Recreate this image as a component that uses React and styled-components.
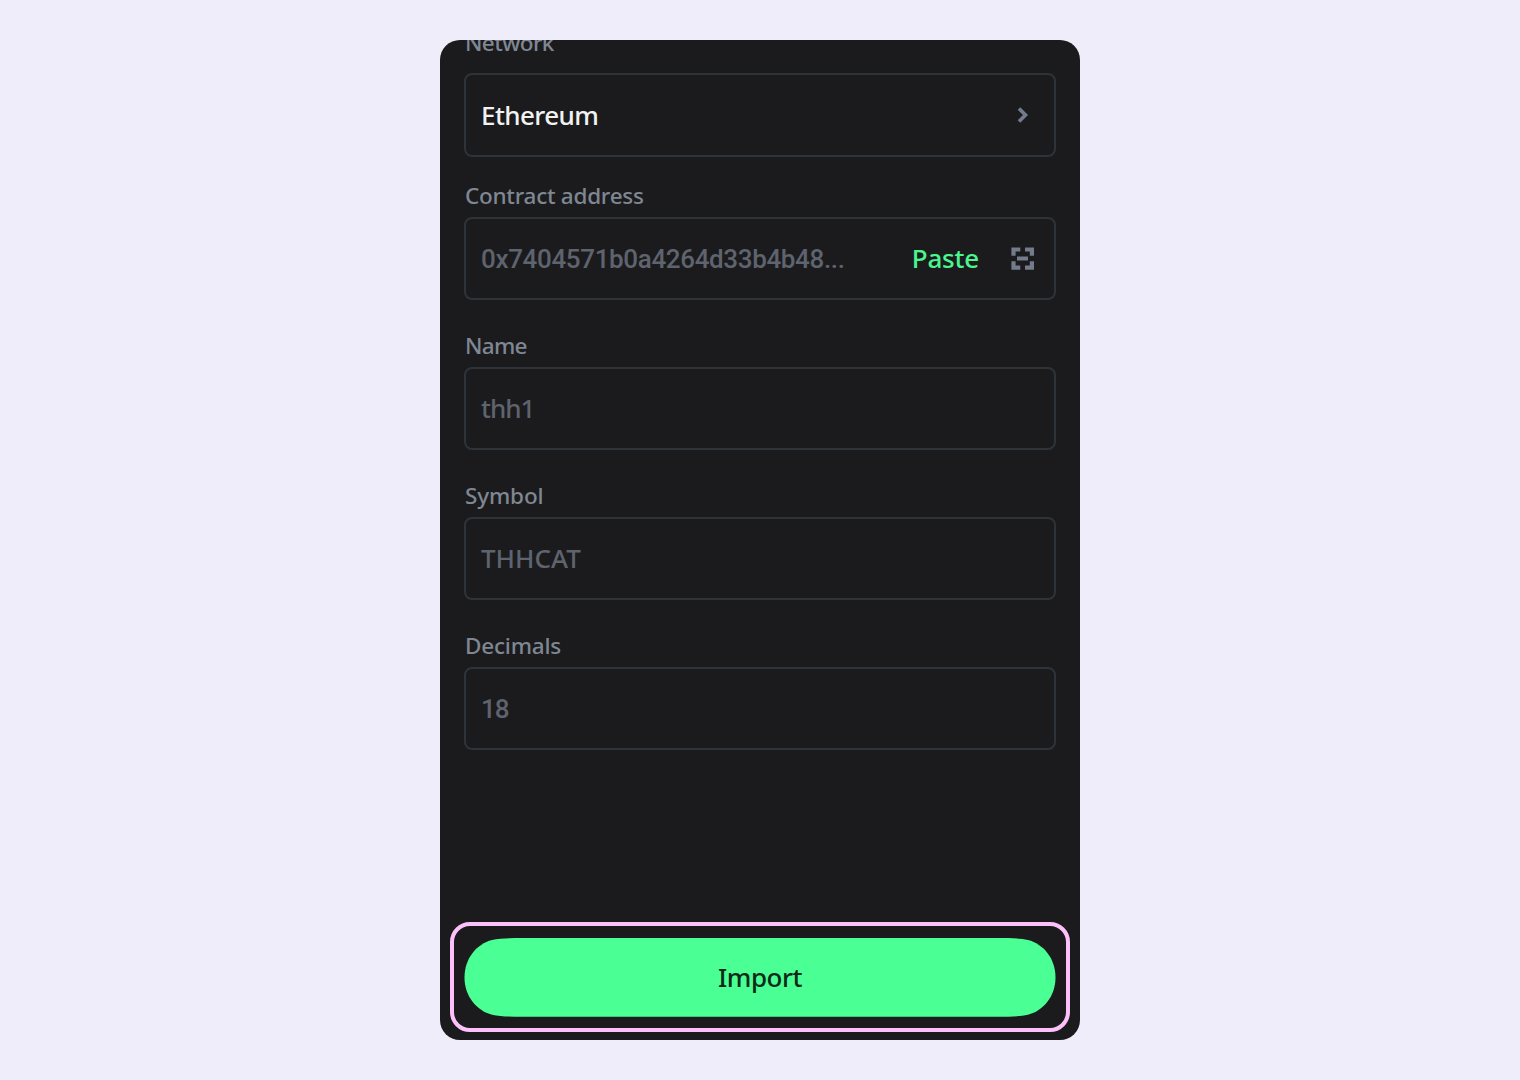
import React from 'react';
import styled, { createGlobalStyle } from 'styled-components';

const GlobalStyle = createGlobalStyle`
  * {
    box-sizing: border-box;
  }

  body {
    margin: 0;
    background: #efedfa;
    font-family: "Noto Sans", "Open Sans", sans-serif;
  }
`;

const Page = styled.main`
  display: flex;
  justify-content: center;
  height: 1080px;
  padding: 40px 0;
`;

const Panel = styled.section`
  display: flex;
  flex-direction: column;
  width: 640px;
  height: 1000px;
  padding: 0 10px 8px;
  overflow: hidden;
  border-radius: 20px;
  background: #1b1b1d;
`;

const Form = styled.div`
  display: flex;
  flex-direction: column;
  flex: 1;
  padding: 0 14px;
  margin-top: -13px;
`;

const Field = styled.div`
  display: flex;
  flex-direction: column;
  margin-bottom: ${({ $after }) => $after}px;
`;

const Label = styled.label`
  height: 30px;
  margin-bottom: ${({ $gap }) => $gap}px;
  padding-left: 1px;
  color: #7f8793;
  font-size: 22.5px;
  font-weight: 500;
  line-height: 32px;
  letter-spacing: ${({ $spacing }) => $spacing || 0}px;
`;

const Control = styled.div`
  display: flex;
  align-items: center;
  height: ${({ $height }) => $height || 83}px;
  padding: 0 19px 0 15px;
  border: 2px solid #2e333a;
  border-radius: 8px;
`;

const Value = styled.span`
  flex: 1;
  color: ${({ $filled }) => ($filled ? '#f2f2f2' : '#5e636e')};
  font-family: ${({ $numeric }) => ($numeric ? 'Roboto, sans-serif' : '"Noto Sans", sans-serif')};
  font-size: 26px;
  font-weight: 500;
  line-height: 36px;
  padding-bottom: ${({ $lift }) => $lift || 0}px;
  letter-spacing: ${({ $spacing }) => $spacing || 0}px;
`;

const PasteButton = styled.button`
  margin-right: 32px;
  padding: 0 0 1px;
  border: 0;
  background: none;
  color: #4bf590;
  font: 500 26px/36px "Noto Sans", sans-serif;
  letter-spacing: -0.2px;
`;

const Icon = styled.svg`
  display: block;
  width: 24px;
  height: 24px;
  color: #747b8b;
`;

const Footer = styled.div`
  padding: 12px 10px 11px;
  border: 4px solid #fcc1fb;
  border-radius: 20px;
`;

const ImportButton = styled.button`
  display: block;
  width: 592px;
  height: 79px;
  padding: 0;
  border: 0;
  background: #4aff93;
  clip-path: path("M.5 39.5C.5 20.5 12.5 6 28 2C36 .2 46 0 58 0H534C546 0 556 .2 564 2C579.5 6 591.5 20.5 591.5 39.5C591.5 58.2 579.5 72.7 564 76.7C556 78.5 546 78.7 534 78.7H58C46 78.7 36 78.5 28 76.7C12.5 72.7 .5 58.2 .5 39.5Z");
  color: #0b2a18;
  font: 500 26px/79px "Noto Sans", sans-serif;
  letter-spacing: -0.5px;
`;

const ChevronIcon = () => (
  <Icon viewBox="0 0 24 24" fill="none" stroke="currentColor" strokeWidth="3.6">
    <path d="M8 5.5L14.5 12L8 18.5" />
  </Icon>
);

const ScanIcon = () => (
  <Icon viewBox="0 0 24 24" fill="currentColor">
    <path d="M.4 .4H9.3V4.4H4.6V8.8H.4ZM14 .4H23V8.8H18.8V4.4H14ZM.4 14.2H4.6V18.6H9.3V22.7H.4ZM18.8 14.2H23V22.7H14V18.6H18.8ZM6 9.4H17V13.4H6Z" />
  </Icon>
);

const App = () => (
  <>
    <GlobalStyle />
    <Page>
      <Panel>
        <Form>
          <Field $after={23}>
            <Label $gap={16} $spacing={-0.6}>Network</Label>
            <Control $height={84}>
              <Value $filled $spacing={-0.6}>Ethereum</Value>
              <ChevronIcon />
            </Control>
          </Field>
          <Field $after={30}>
            <Label $gap={7} $spacing={-0.26}>Contract address</Label>
            <Control>
              <Value $numeric $spacing={-0.36}>0x7404571b0a4264d33b4b48...</Value>
              <PasteButton>Paste</PasteButton>
              <ScanIcon />
            </Control>
          </Field>
          <Field $after={30}>
            <Label $gap={7} $spacing={-0.7}>Name</Label>
            <Control>
              <Value $spacing={-1} $lift={1}>thh1</Value>
            </Control>
          </Field>
          <Field $after={30}>
            <Label $gap={7} $spacing={-0.15}>Symbol</Label>
            <Control>
              <Value $lift={1}>THHCAT</Value>
            </Control>
          </Field>
          <Field $after={0}>
            <Label $gap={7} $spacing={-0.2}>Decimals</Label>
            <Control>
              <Value $numeric $spacing={-1}>18</Value>
            </Control>
          </Field>
        </Form>
        <Footer>
          <ImportButton>Import</ImportButton>
        </Footer>
      </Panel>
    </Page>
  </>
);

export default App;
